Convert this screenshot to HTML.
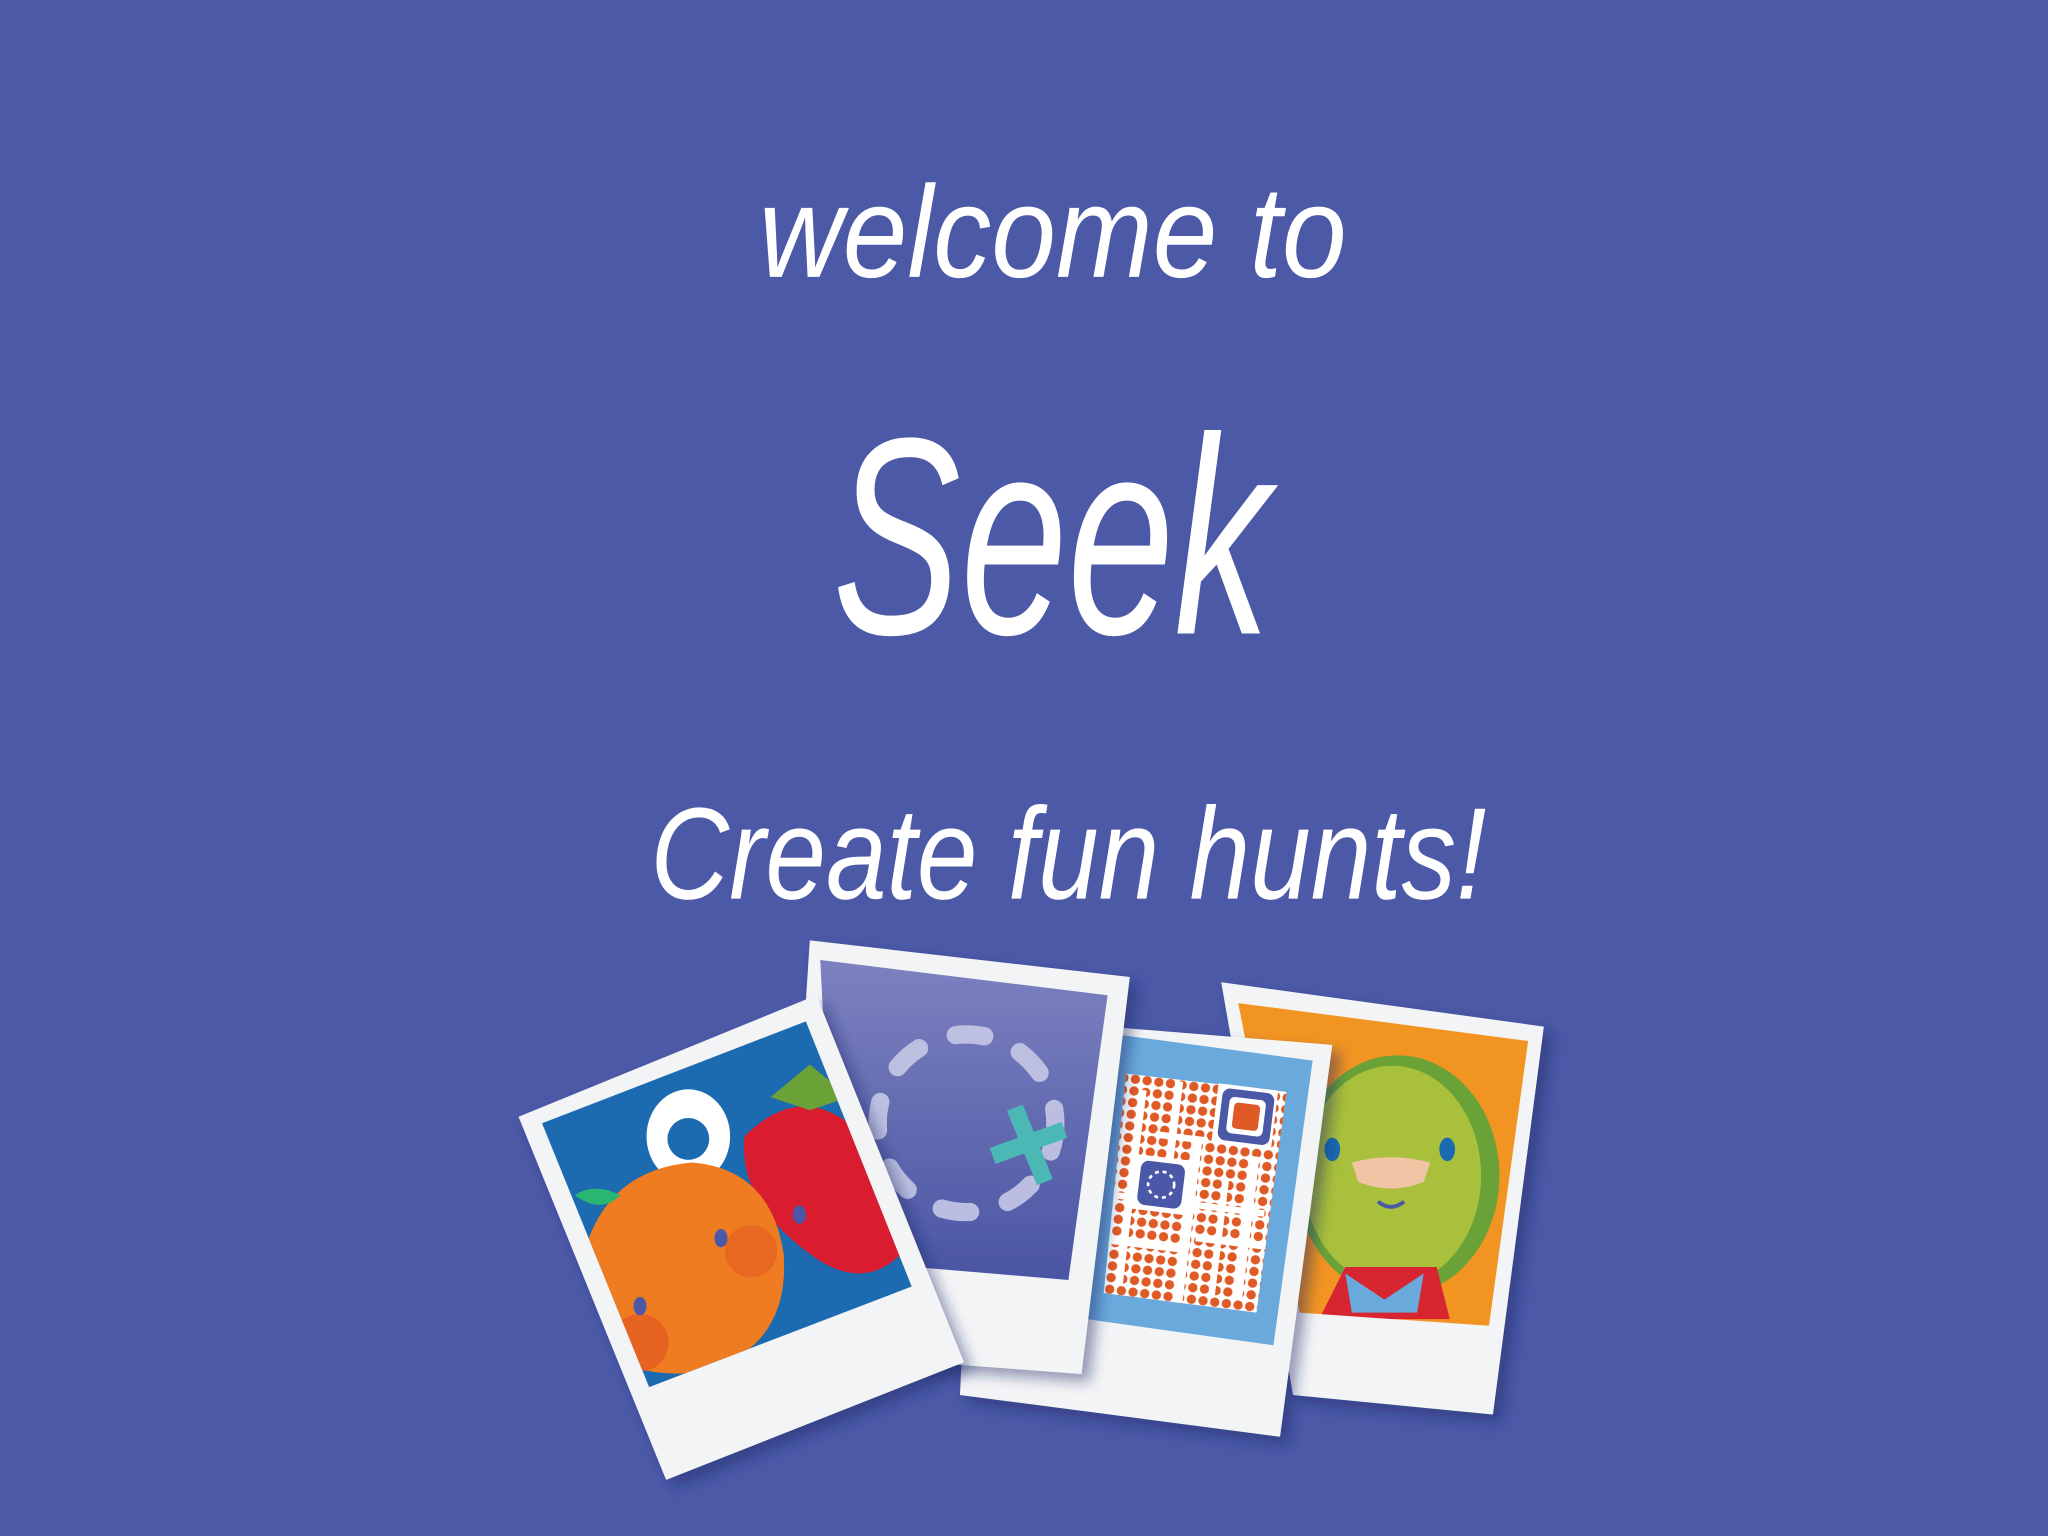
<!DOCTYPE html>
<html><head><meta charset="utf-8"><style>
html,body{margin:0;padding:0;background:#4b59a7;}
svg{display:block}
</style></head><body>
<svg width="2048" height="1536" viewBox="0 0 1568 1176" xmlns="http://www.w3.org/2000/svg">
<defs>
<filter id="sh" x="-20%" y="-20%" width="140%" height="140%"><feDropShadow dx="6" dy="6" stdDeviation="5" flood-color="#1c2260" flood-opacity="0.45"/></filter>
<linearGradient id="dg" x1="0" y1="0" x2="0" y2="1"><stop offset="0" stop-color="#7c81bf"/><stop offset="1" stop-color="#4a55a4"/></linearGradient>
<pattern id="dots" width="9" height="9" patternUnits="userSpaceOnUse"><circle cx="4.5" cy="4.5" r="3.6" fill="#e05a26"/></pattern>
<clipPath id="c1"><polygon points="415,860 617,782 698,985 497,1062"/></clipPath>
<clipPath id="c4"><polygon points="948,768 1170,797 1140,1015 995,1005"/></clipPath>
<clipPath id="cq"><polygon points="862,822 985,836 962,1005 845,990"/></clipPath>
</defs>
<rect width="1568" height="1176" fill="#4b59a7"/>
<g fill="#fff" font-family="'Liberation Sans',sans-serif" font-style="italic" text-anchor="middle">
<text x="806" y="212" font-size="100" textLength="450" lengthAdjust="spacingAndGlyphs">welcome to</text>
<text x="805" y="485" font-size="215" textLength="335" lengthAdjust="spacingAndGlyphs">Seek</text>
<text x="818" y="688" font-size="100" textLength="640" lengthAdjust="spacingAndGlyphs">Create fun hunts!</text>
</g>
<!-- kiwi -->
<g filter="url(#sh)">
<polygon points="935,752 1182,786 1143,1083 990,1068" fill="#f3f4f6"/>
<polygon points="948,768 1170,797 1140,1015 995,1005" fill="#f29421"/>
<g clip-path="url(#c4)">
<ellipse cx="1070" cy="900" rx="78" ry="92" fill="#6aa238"/>
<ellipse cx="1066" cy="900" rx="68" ry="84" fill="#a8c03a"/>
<ellipse cx="1020" cy="880" rx="6" ry="9" fill="#1a6ab0"/>
<ellipse cx="1108" cy="880" rx="6" ry="9" fill="#1a6ab0"/>
<path d="M1035 890 Q1065 882 1095 890 L1090 905 Q1065 915 1040 905Z" fill="#f0c4a4"/>
<path d="M1055 920 Q1065 928 1075 920" stroke="#4b59a7" stroke-width="3" fill="none"/>
<path d="M1010 1010 L1030 970 L1100 970 L1110 1010Z" fill="#d72830"/>
<path d="M1030 975 L1060 995 L1090 975 L1085 1005 L1035 1005Z" fill="#6aa9dc"/>
</g>
</g>
<!-- QR -->
<g filter="url(#sh)">
<polygon points="748,778 1020,800 980,1100 735,1068" fill="#f3f4f6"/>
<polygon points="840,790 1005,812 975,1030 832,1010" fill="#6aa9dc"/>
<polygon points="862,822 985,836 962,1005 845,990" fill="#fff"/>
<g clip-path="url(#cq)">
<g transform="rotate(7 915 910)">
<rect x="845" y="820" width="140" height="185" fill="url(#dots)"/>
<g fill="#fff">
<rect x="864" y="840" width="5" height="150"/><rect x="890" y="830" width="6" height="60"/><rect x="910" y="870" width="6" height="130"/>
<rect x="935" y="900" width="5" height="90"/><rect x="955" y="880" width="6" height="110"/><rect x="850" y="920" width="120" height="5"/>
<rect x="850" y="955" width="60" height="5"/><rect x="920" y="945" width="60" height="5"/><rect x="880" y="870" width="40" height="5"/>
</g>
</g>
</g>
<rect x="930" y="832" width="46" height="46" fill="#fff" transform="rotate(7 953 855)"/>
<rect x="934" y="835" width="40" height="40" rx="6" fill="#4b59a7" transform="rotate(7 954 855)"/>
<rect x="940" y="841" width="28" height="28" rx="4" fill="#fff" transform="rotate(7 954 855)"/>
<rect x="944" y="845" width="20" height="20" rx="3" fill="#e05a26" transform="rotate(7 954 855)"/>
<rect x="868" y="886" width="42" height="42" fill="#fff" transform="rotate(7 889 907)"/>
<rect x="872" y="890" width="34" height="34" rx="6" fill="#4b59a7" transform="rotate(7 889 907)"/>
<circle cx="889" cy="907" r="10" fill="none" stroke="#fff" stroke-width="2" stroke-dasharray="3 3"/>
</g>
<!-- dashed -->
<g filter="url(#sh)">
<polygon points="620,720 865,748 828,1052 735,1045 600,1030" fill="#f3f4f6"/>
<polygon points="628,735 848,762 818,980 640,965" fill="url(#dg)"/>
<circle cx="740" cy="860" r="68" fill="none" stroke="#c5c8e4" stroke-width="14" stroke-linecap="round" stroke-dasharray="22 30" opacity="0.9"/>
<g stroke="#4bb8b5" stroke-width="13"><line x1="760" y1="885" x2="815" y2="865"/><line x1="777" y1="848" x2="800" y2="905"/></g>
</g>
<!-- front -->
<g filter="url(#sh)">
<polygon points="397,855 625,762 738,1043 510,1133" fill="#f3f4f6"/>
<polygon points="415,860 617,782 698,985 497,1062" fill="#1a6ab0"/>
<g clip-path="url(#c1)">
<ellipse cx="527" cy="870" rx="32" ry="36" fill="#fff"/>
<circle cx="527" cy="872" r="16" fill="#1a6ab0"/>
<path d="M570 870 Q610 830 650 860 Q700 900 690 960 Q660 990 620 960 Q565 920 570 870Z" fill="#d91f2e"/>
<path d="M590 840 L620 815 L650 840 L620 850Z" fill="#6aa238"/>
<path d="M450 950 Q470 895 530 890 Q590 895 600 960 Q605 1030 540 1050 Q470 1060 445 1010Z" fill="#f07b21"/>
<circle cx="490" cy="1028" r="22" fill="#e25a26" opacity="0.7"/>
<circle cx="575" cy="958" r="20" fill="#e25a26" opacity="0.6"/>
<ellipse cx="552" cy="948" rx="5" ry="7" fill="#4b59a7"/>
<ellipse cx="490" cy="1000" rx="5" ry="7" fill="#4b59a7"/>
<ellipse cx="612" cy="930" rx="5" ry="7" fill="#4b59a7"/>
<path d="M440 915 Q455 905 475 915 Q460 930 440 915Z" fill="#2ab573"/>
</g>
</g>
</svg>
</body></html>
